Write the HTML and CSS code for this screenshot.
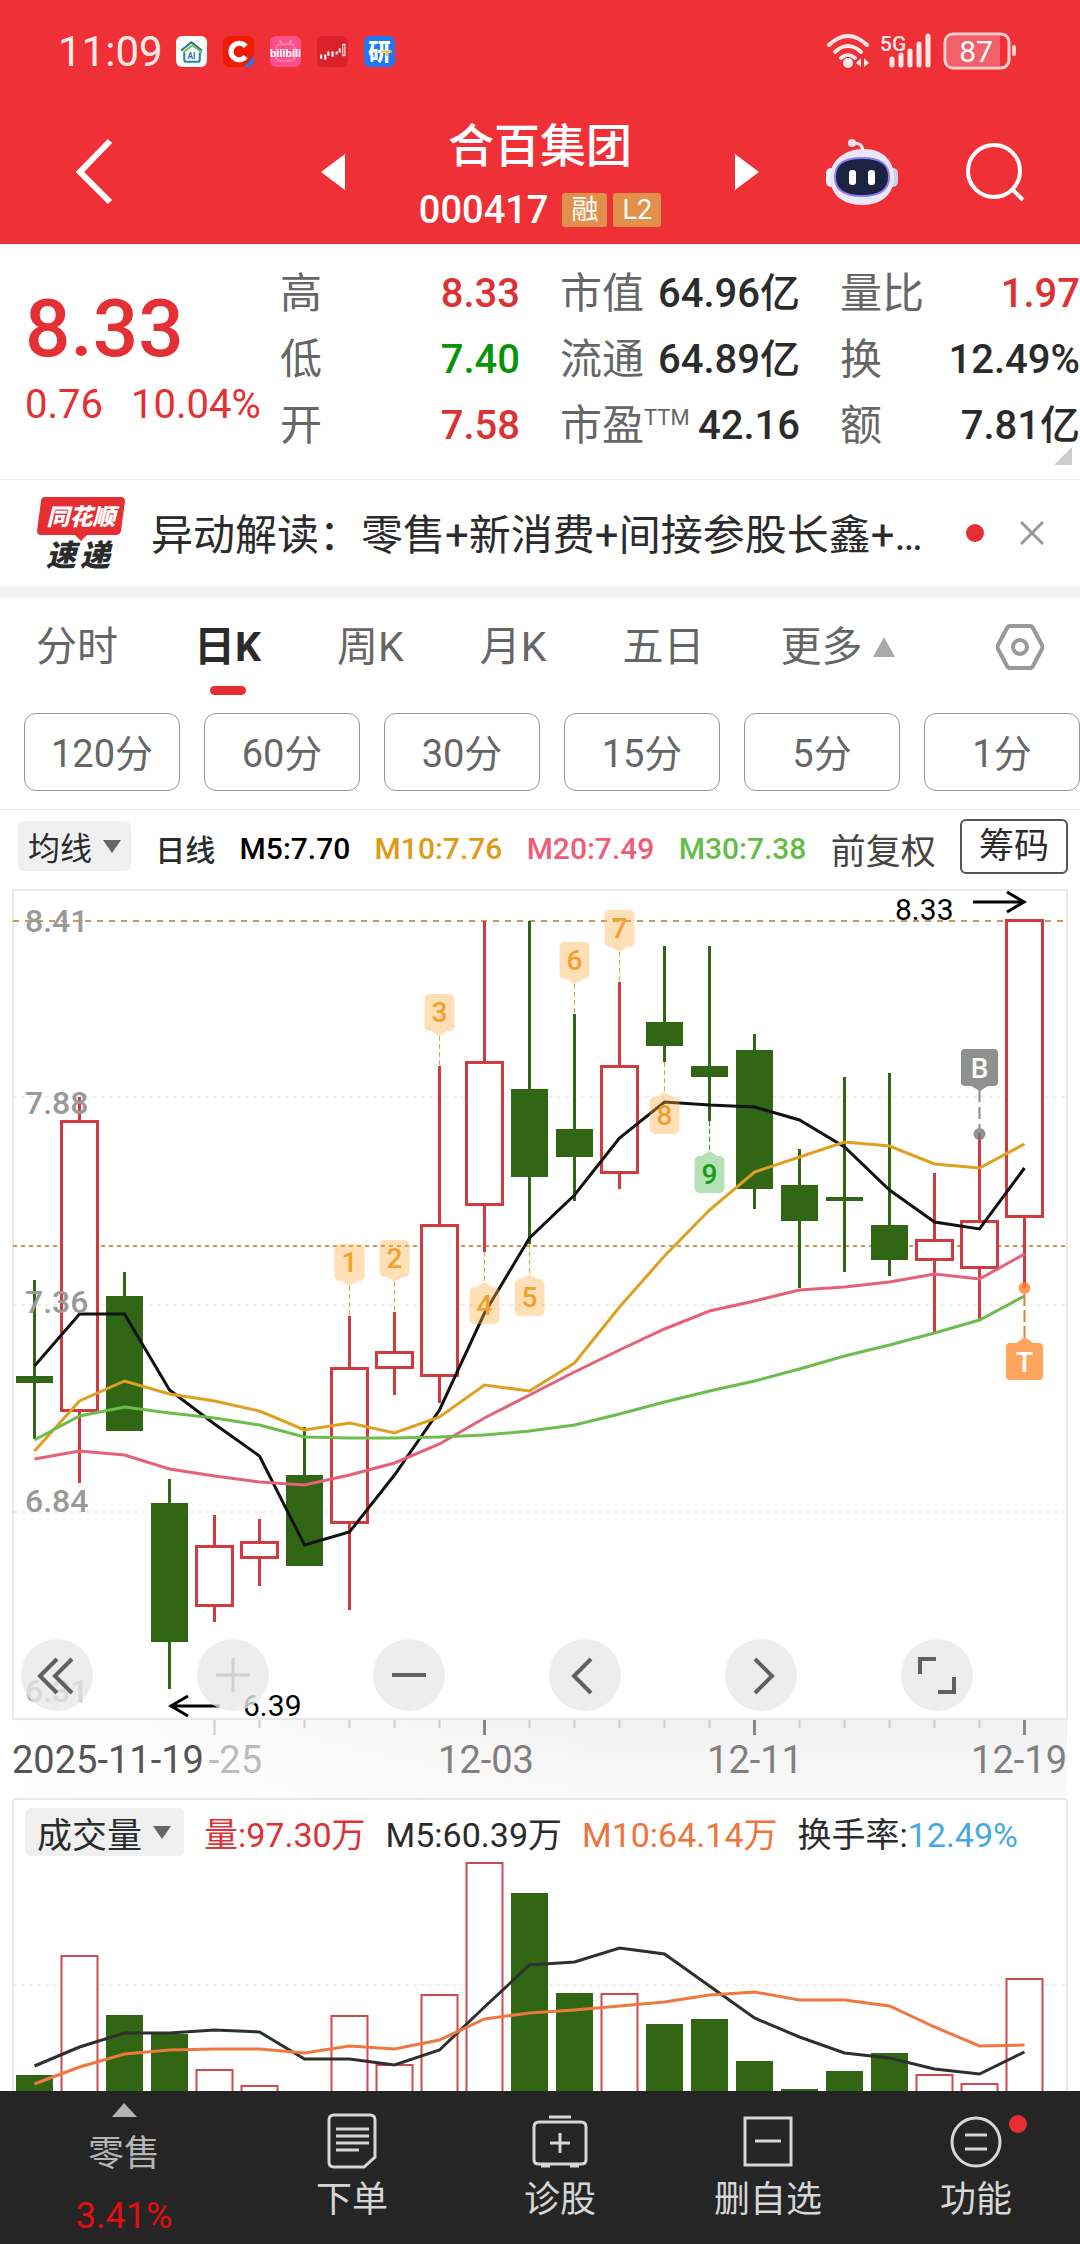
FILE: index.html
```html
<!DOCTYPE html>
<html lang="zh-CN">
<head>
    <meta charset="UTF-8">
    <meta name="viewport" content="width=device-width, initial-scale=1.0">
    <title>合百集团 000417</title>
    <link rel="stylesheet" href="styles.css">
</head>
<body>
    <header class="top">
        <div class="status">
            <span class="time">11:09</span>
            <div class="apps">
                <svg class="app" viewBox="0 0 30 30">
                    <rect width="30" height="30" rx="6" fill="#fff"/>
                    <path d="M5 14L15 6l10 8" fill="none" stroke="#1d6fb0" stroke-width="2"/>
                    <path d="M7 16l9-7 9 7" fill="none" stroke="#7cc243" stroke-width="2"/>
                    <path d="M8 16v7q0 2 2 2h11q2 0 2-2v-7" fill="none" stroke="#1f86b8" stroke-width="2"/>
                    <text x="15" y="22" font-size="8" font-weight="700" text-anchor="middle" fill="#1d6fb0">AI</text>
                </svg>
                <svg class="app" viewBox="0 0 30 30">
                    <rect width="30" height="30" rx="6" fill="#ee1c00"/>
                    <path d="M22 10a8 8 0 1 0 0 10" fill="none" stroke="#fff" stroke-width="5"/>
                    <path d="M30 19v5q0 6-6 6h-4z" fill="#3a6fd8"/>
                </svg>
                <svg class="app" viewBox="0 0 30 30">
                    <rect width="30" height="30" rx="6" fill="#ff4f8b"/>
                    <path d="M9 4l3 4M21 4l-3 4" stroke="#ff8fb5" stroke-width="2"/>
                    <rect x="6" y="8" width="18" height="16" rx="4" fill="none" stroke="#ff7eab" stroke-width="2"/>
                    <text x="15" y="20" font-size="11" font-weight="700" text-anchor="middle" fill="#fff">bilibili</text>
                </svg>
                <svg class="app" viewBox="0 0 30 30">
                    <rect width="30" height="30" rx="6" fill="#d9222c"/>
                    <path d="M4 18v4M8 18v5M11 15v4M15 15v5M19 15v3M22 12v4" stroke="#fff" stroke-width="2"/>
                    <rect x="25" y="8" width="2" height="11" fill="none" stroke="#fff"/>
                </svg>
                <svg class="app" viewBox="0 0 30 30">
                    <rect width="30" height="30" rx="6" fill="#1e78f0"/>
                    <text x="15" y="23" font-size="22" font-weight="900" text-anchor="middle" fill="#fff">研</text>
                    <path d="M16 15h11M22 15v4" stroke="#e6c33c" stroke-width="2"/>
                </svg>
            </div>
            <svg class="signals" viewBox="0 0 192 38">
                <g fill="none" stroke="#ffe9e7" stroke-width="4" stroke-linecap="round">
                    <path d="M3 13q19-18 38 0"/>
                    <path d="M9 20q13-12 26 0"/>
                    <path d="M15 26q7-6 14 0"/>
                </g>
                <circle cx="22" cy="31" r="5" fill="#ffe9e7"/>
                <path d="M35 26v9l-5-4zM38 26v9l5-4z" fill="#ffe9e7"/>
                <text x="54" y="19" font-size="21" font-weight="500" fill="#ffe9e7">5G</text>
                <path d="M66 27v6M75 23v10M84 19v14M93 12v21M102 4v29" stroke="#ffe9e7" stroke-width="5" stroke-linecap="round"/>
                <rect x="119" y="2" width="64" height="34" rx="8" fill="none" stroke="#ffd0ce" stroke-width="3"/>
                <path d="M126 4h48v30h-48q-5 0-5-5V9q0-5 5-5z" fill="#f2606a"/>
                <rect x="186" y="13" width="4" height="11" rx="2" fill="#ffd0ce"/>
                <text x="150" y="30" font-size="30" text-anchor="middle" fill="#fff">87</text>
            </svg>
        </div>
        <div class="titlebar">
            <div class="side side-left">
                <button class="icon-btn" aria-label="返回">
                    <svg width="38" height="68" viewBox="0 0 38 68"><path d="M34 3L4 34l30 30" fill="none" stroke="#fff" stroke-width="6"/></svg>
                </button>
                <button class="icon-btn" aria-label="上一只">
                    <svg width="24" height="36" viewBox="0 0 24 36"><path d="M24 0v36L0 18z" fill="#fff"/></svg>
                </button>
            </div>
            <div class="title">
                <h1>合百集团</h1>
                <div class="code">
                    <span>000417</span>
                    <em class="badge">融</em>
                    <em class="badge">L2</em>
                </div>
            </div>
            <div class="side side-right">
                <button class="icon-btn" aria-label="下一只">
                    <svg width="24" height="36" viewBox="0 0 24 36"><path d="M0 0v36l24-18z" fill="#fff"/></svg>
                </button>
                <button class="icon-btn" aria-label="助手">
                    <svg width="72" height="68" viewBox="0 0 72 68">
                        <path d="M26 5q11-1 11 9" fill="none" stroke="#f3e3ee" stroke-width="3"/>
                        <circle cx="26" cy="5" r="4" fill="#f3e3ee"/>
                        <rect x="0" y="30" width="12" height="19" rx="5" fill="#f6f0fa"/>
                        <rect x="60" y="30" width="12" height="19" rx="5" fill="#cdd0f5"/>
                        <path d="M38 11c20 0 30 13 30 28 0 17-12 28-32 28S4 56 4 39c0-15 13-28 34-28z" fill="#ebe7fa"/>
                        <path d="M36 20c20 0 27 7 27 19s-8 19-27 19S9 51 9 39s7-19 27-19z" fill="#1c2342" stroke="#8f7bf0" stroke-width="2"/>
                        <rect x="23" y="32" width="7" height="15" rx="3" fill="#fff"/>
                        <rect x="42" y="32" width="7" height="15" rx="3" fill="#fff"/>
                    </svg>
                </button>
                <button class="icon-btn" aria-label="搜索">
                    <svg width="60" height="60" viewBox="0 0 60 60"><g fill="none" stroke="#fff" stroke-width="4"><circle cx="29" cy="29" r="26"/><path d="M47 47l11 11"/></g></svg>
                </button>
            </div>
        </div>
    </header>

    <section class="quote">
        <div class="price">
            <strong>8.33</strong>
            <p><span>0.76</span><span>10.04%</span></p>
        </div>
        <dl>
            <div><dt>高</dt><dd class="red">8.33</dd></div>
            <div><dt>低</dt><dd class="green">7.40</dd></div>
            <div><dt>开</dt><dd class="red">7.58</dd></div>
        </dl>
        <dl>
            <div><dt>市值</dt><dd>64.96亿</dd></div>
            <div><dt>流通</dt><dd>64.89亿</dd></div>
            <div><dt>市盈<sup>TTM</sup></dt><dd>42.16</dd></div>
        </dl>
        <dl>
            <div><dt>量比</dt><dd class="red">1.97</dd></div>
            <div><dt>换</dt><dd>12.49%</dd></div>
            <div><dt>额</dt><dd>7.81亿</dd></div>
        </dl>
        <i class="corner"></i>
    </section>

    <section class="news">
        <svg class="news-logo" viewBox="0 0 88 74">
            <path d="M8 1h76q4 0 4 4l-4 30q-1 4-5 4H50l-6 6-6-6H4q-4 0-4-4L4 5q0-4 4-4z" fill="#e62f33"/>
            <text x="44" y="29" font-size="23" class="logo-text" fill="#fff">同花顺</text>
            <text x="24" y="70" font-size="30" class="logo-text" fill="#2b2b2b">速</text>
            <text x="58" y="70" font-size="30" class="logo-text" fill="#2b2b2b">递</text>
        </svg>
        <a href="#" class="news-text">异动解读：零售+新消费+间接参股长鑫+…</a>
        <i class="dot"></i>
        <button class="icon-btn" aria-label="关闭">
            <svg width="24" height="24" viewBox="0 0 24 24"><path d="M1 1l22 22M23 1L1 23" stroke="#999" stroke-width="3"/></svg>
        </button>
    </section>

    <nav class="tabs">
        <a href="#">分时</a>
        <a href="#" class="active">日K</a>
        <a href="#">周K</a>
        <a href="#">月K</a>
        <a href="#">五日</a>
        <a href="#" class="more">更多<svg width="22" height="20" viewBox="0 0 22 20"><path d="M11 0l11 20H0z" fill="#aaa"/></svg></a>
        <button class="icon-btn setting" aria-label="设置">
            <svg width="48" height="46" viewBox="0 0 48 46"><g fill="none" stroke="#999" stroke-width="4"><path d="M14 2h20q2 0 3 2l9 17q1 2 0 4l-9 17q-1 2-3 2H14q-2 0-3-2L2 25q-1-2 0-4l9-17q1-2 3-2z"/><circle cx="24" cy="23" r="7"/></g></svg>
        </button>
    </nav>

    <div class="periods">
        <button>120分</button>
        <button>60分</button>
        <button>30分</button>
        <button>15分</button>
        <button>5分</button>
        <button>1分</button>
    </div>

    <div class="ma-bar">
        <button class="drop">均线<i></i></button>
        <span class="dark">日线</span>
        <span class="black">M5:7.70</span>
        <span class="c10">M10:7.76</span>
        <span class="c20">M20:7.49</span>
        <span class="c30">M30:7.38</span>
        <span class="fq">前复权</span>
        <button class="chip">筹码</button>
    </div>

    <section class="kline">
        <svg id="kline" viewBox="0 880 1080 920">
            <defs>
                <linearGradient id="axisBg" x1="0" x2="0" y1="0" y2="1">
                    <stop offset="0" stop-color="#f1f1f1"/>
                    <stop offset="1" stop-color="#fafafa"/>
                </linearGradient>
                <linearGradient id="axisFade" x1="0" x2="1" y1="0" y2="0">
                    <stop offset="0" stop-color="#fff"/>
                    <stop offset="1" stop-color="#fff" stop-opacity="0"/>
                </linearGradient>
            </defs>
            <rect x="13" y="1719" width="1054" height="80" fill="url(#axisBg)"/>
            <rect x="13" y="1719" width="600" height="80" fill="url(#axisFade)"/>
            <path class="frame" d="M13 1719V890h1054v829M13 1719h1054M13 1799h1054"/>
            <path class="grid" d="M13 1097h1054M13 1305h1054M13 1512h1054"/>
            <path class="limit" stroke-dasharray="6 6" d="M13 921h1054"/>
            <path class="limit" stroke-dasharray="4 4" d="M13 1246h1054"/>
            <g id="candles"></g>
            <g id="ma"></g>
            <g class="scale">
                <text x="25" y="932">8.41</text>
                <text x="25" y="1114">7.88</text>
                <text x="25" y="1313">7.36</text>
                <text x="25" y="1512">6.84</text>
                <text x="25" y="1702">6.31</text>
            </g>
            <g id="tags"></g>
            <g class="arrow">
                <path d="M973 902h51M1007 892l17 10-17 10"/>
                <path d="M220 1706h-50M188 1696l-17 10 17 10"/>
            </g>
            <text class="mark" x="895" y="920">8.33</text>
            <text class="mark" x="243" y="1716">6.39</text>
            <g id="ticks"></g>
            <g class="dates">
                <text x="12" y="1773" fill="#555">2025-11-19</text>
                <text x="262" y="1773" fill="#bbb" text-anchor="end">-25</text>
                <text x="486" y="1773" text-anchor="middle">12-03</text>
                <text x="755" y="1773" text-anchor="middle">12-11</text>
                <text x="1067" y="1773" text-anchor="end">12-19</text>
            </g>
        </svg>
        <div class="controls">
            <button aria-label="收起"><svg viewBox="0 0 72 72"><path d="M36 20L19 37l17 17M51 20L34 37l17 17"/></svg></button>
            <button aria-label="放大" class="off"><svg viewBox="0 0 72 72"><path d="M36 19v34M19 36h34"/></svg></button>
            <button aria-label="缩小"><svg viewBox="0 0 72 72"><path d="M19 36h34"/></svg></button>
            <button aria-label="左移"><svg viewBox="0 0 72 72"><path d="M42 20L25 37l17 17"/></svg></button>
            <button aria-label="右移"><svg viewBox="0 0 72 72"><path d="M30 20l17 17-17 17"/></svg></button>
            <button aria-label="全屏"><svg viewBox="0 0 72 72"><path d="M19 35V20h16M53 38v15H37"/></svg></button>
        </div>
    </section>

    <section class="volume">
        <div class="vol-bar">
            <button class="drop">成交量<i></i></button>
            <span class="red">量:97.30万</span>
            <span class="dark">M5:60.39万</span>
            <span class="orange">M10:64.14万</span>
            <span class="dark">换手率:<b>12.49%</b></span>
        </div>
        <svg id="volume" viewBox="0 1860 1080 231">
            <path class="frame" d="M13 1860v231M1067 1860v231"/>
            <path class="grid" d="M13 1985h1054"/>
            <g id="volBars"></g>
            <g id="volMa"></g>
        </svg>
    </section>

    <footer class="bottom">
        <a href="#" class="sector">
            <svg width="25" height="14" viewBox="0 0 25 14"><path d="M12 0l13 14H0z" fill="#b5b5b5"/></svg>
            <span>零售</span>
            <b>3.41%</b>
        </a>
        <a href="#">
            <svg width="56" height="56" viewBox="0 0 56 56"><path d="M10 2h36q5 0 5 5v37L40 54H10q-5 0-5-5V7q0-5 5-5zM12 16h33M12 23h33M12 30h33M12 37h23"/></svg>
            <span>下单</span>
        </a>
        <a href="#">
            <svg width="56" height="56" viewBox="0 0 56 56"><path d="M17 4h22M7 9h42q5 0 5 5v33q0 4-5 4H7q-5 0-5-4V14q0-5 5-5zM28 20v20M18 30h20M9 53h9M38 53h9"/></svg>
            <span>诊股</span>
        </a>
        <a href="#">
            <svg width="56" height="56" viewBox="0 0 56 56"><path d="M5 5h46v47H5zM15 28h26"/></svg>
            <span>删自选</span>
        </a>
        <a href="#">
            <svg width="56" height="56" viewBox="0 0 56 56"><circle cx="28" cy="29" r="24"/><path d="M17 22h22M17 36h22"/></svg>
            <span>功能</span>
            <i class="dot"></i>
        </a>
    </footer>

    <script src="chart.js"></script>
</body>
</html>
```
FILE: styles.css
```css
*{
    margin: 0;
    padding: 0;
    box-sizing: border-box;
}
body{
    background-color: #fff;
    color: #2b2b2b;
    font-family: Roboto, "Noto Sans CJK SC", sans-serif;
    font-size: 34px;
    overflow-x: hidden;
}
button{
    border: none;
    background: none;
    font-family: inherit;
    color: inherit;
}
a{
    color: inherit;
    text-decoration: none;
}
svg{
    display: block;
}
em, i{
    font-style: normal;
}
.icon-btn{
    flex-shrink: 0;
}
.red{ color: #dc3236; }
.green{ color: #079407; }
.dark{ color: #2b2b2b; }
.black{ color: #000; }
.orange{ color: #f0733a; }
.c10{ color: #e09a14; }
.c20{ color: #ee5d78; }
.c30{ color: #64bd46; }
.dot{
    width: 18px;
    height: 18px;
    border-radius: 50%;
    background-color: #e62f33;
}

/* 顶部 */
.top{
    height: 244px;
    background-color: #f03037;
    color: #fff;
}
.status{
    display: flex;
    align-items: center;
    height: 102px;
    padding: 0 62px 0 58px;
}
.time{
    font-size: 42px;
    width: 118px;
    color: #ffe9e7;
}
.apps{
    display: flex;
    gap: 16px;
}
.app{
    width: 31px;
    height: 31px;
}
.signals{
    width: 192px;
    margin-left: auto;
}
.titlebar{
    display: grid;
    grid-template-columns: 1fr 390px 1fr;
}
.side{
    display: flex;
    align-items: center;
    justify-content: space-between;
    height: 142px;
    padding-bottom: 2px;
}
.side-left{
    padding-left: 76px;
}
.side-right{
    padding-right: 55px;
}
.title{
    text-align: center;
    padding-top: 11px;
}
.title h1{
    font-size: 46px;
    line-height: 66px;
    font-weight: 500;
}
.code{
    display: flex;
    justify-content: center;
    align-items: center;
    gap: 6px;
    height: 62px;
    font-size: 38px;
    font-weight: 500;
}
.code span{
    margin-right: 8px;
}
.badge{
    padding: 0 9px;
    height: 34px;
    line-height: 34px;
    border-radius: 3px;
    background-color: #e2914c;
    font-size: 27px;
    font-weight: 400;
}

/* 行情 */
.quote{
    position: relative;
    display: grid;
    grid-template-columns: 240px 1fr 1fr 1fr;
    column-gap: 40px;
    padding: 17px 0 20px;
}
.price{
    padding: 18px 0 0 25px;
    color: #e43033;
    white-space: nowrap;
}
.price strong{
    display: block;
    font-size: 80px;
    line-height: 100px;
    font-weight: 500;
}
.price p{
    display: flex;
    gap: 28px;
    font-size: 40px;
    line-height: 52px;
}
.quote dl div{
    display: flex;
    justify-content: space-between;
    height: 66px;
    line-height: 66px;
}
.quote dt{
    font-size: 42px;
    color: #666;
    white-space: nowrap;
}
.quote dd{
    font-size: 40px;
    font-weight: 500;
}
.quote sup{
    font-size: 22px;
    line-height: 1;
}
.corner{
    position: absolute;
    right: 8px;
    bottom: 14px;
    border-left: 18px solid transparent;
    border-bottom: 18px solid #ccc;
}

/* 异动解读 */
.news{
    display: flex;
    align-items: center;
    height: 119px;
    padding: 0 24px 0 37px;
    border-top: 1px solid #eee;
    border-bottom: 12px solid #f4f4f4;
}
.news-logo{
    width: 88px;
    margin-right: 26px;
    flex-shrink: 0;
}
.logo-text{
    font-weight: 900;
    font-style: italic;
    text-anchor: middle;
}
.news-text{
    padding-bottom: 3px;
    font-size: 42px;
    white-space: nowrap;
}
.news .dot{
    margin-left: auto;
    flex-shrink: 0;
}
.news .icon-btn{
    margin: 0 12px 0 36px;
}

/* 周期 */
.tabs{
    display: flex;
    align-items: center;
    gap: 76px;
    height: 98px;
    padding: 0 36px;
    font-size: 41px;
    color: #666;
}
.tabs a{
    position: relative;
    line-height: 98px;
    white-space: nowrap;
}
.tabs .active{
    color: #2b2b2b;
    font-weight: 700;
}
.tabs .active::after{
    content: "";
    position: absolute;
    left: 50%;
    bottom: 1px;
    width: 36px;
    height: 9px;
    margin-left: -18px;
    border-radius: 5px;
    background-color: #e62f33;
}
.tabs .more{
    display: flex;
    align-items: center;
    gap: 10px;
}
.setting{
    margin-left: auto;
}
.periods{
    display: grid;
    grid-template-columns: repeat(6, 1fr);
    gap: 24px;
    padding: 17px 0 18px 24px;
    border-bottom: 1px solid #e4e4e4;
}
.periods button{
    height: 78px;
    padding-bottom: 3px;
    border: 1px solid #999;
    border-radius: 12px;
    font-size: 38px;
    color: #666;
}
.ma-bar{
    display: flex;
    align-items: center;
    justify-content: space-between;
    height: 70px;
    padding: 2px 12px 0 18px;
    font-size: 30px;
    white-space: nowrap;
}
.ma-bar span{
    padding-top: 4px;
    font-weight: 500;
}
.drop{
    display: flex;
    align-items: center;
    gap: 11px;
    height: 50px;
    padding: 0 10px;
    border-radius: 6px;
    background-color: #f0f0f0;
    font-size: 32px;
}
.drop i{
    border: 9px solid transparent;
    border-top: 13px solid #666;
    border-bottom: none;
}
.ma-bar .fq{
    font-size: 35px;
    font-weight: 400;
    color: #444;
}
.chip{
    width: 108px;
    height: 55px;
    border: 2px solid #555;
    border-radius: 6px;
    font-size: 35px;
    line-height: 49px;
}

/* K线 */
.kline{
    position: relative;
}
.kline > svg, .volume > svg{
    width: 100%;
}
.frame{
    fill: none;
    stroke: #e8e8e8;
    stroke-width: 2;
}
.grid{
    stroke: #ddd;
    stroke-dasharray: 4 4;
}
.limit{
    stroke: #c79a5c;
    stroke-width: 2;
}
.up{
    fill: #fff;
    stroke: #d23b3e;
    stroke-width: 3;
}
.wick-up{
    stroke: #d23b3e;
    stroke-width: 3;
}
.down{
    fill: #306614;
}
.wick-down{
    stroke: #306614;
    stroke-width: 3;
}
.line{
    fill: none;
    stroke-width: 3;
}
.scale{
    font-size: 32px;
    font-weight: 500;
    fill: #999;
}
.mark{
    font-size: 30px;
}
.arrow{
    fill: none;
    stroke: #000;
    stroke-width: 3;
}
.dates{
    font-size: 38px;
    fill: #808080;
}
.tag-text{
    text-anchor: middle;
    font-size: 28px;
    font-weight: 500;
}
.controls{
    position: absolute;
    left: 21px;
    right: 107px;
    bottom: 89px;
    display: flex;
    justify-content: space-between;
}
.controls button{
    width: 72px;
    height: 72px;
    border-radius: 50%;
    background-color: rgba(232, 232, 232, 0.8);
}
.controls path{
    fill: none;
    stroke: #606060;
    stroke-width: 4;
}
.controls .off path{
    stroke: #cfcfcf;
    stroke-width: 3;
}

/* 成交量 */
.vol-bar{
    display: flex;
    align-items: center;
    justify-content: space-between;
    height: 60px;
    margin: 0 12px;
    padding: 4px 48px 0 11px;
    border: 2px solid #e8e8e8;
    border-width: 0 2px;
    font-size: 34px;
    white-space: nowrap;
}
.vol-bar .drop{
    height: 48px;
    padding: 0 13px 0 12px;
    font-size: 35px;
}
.vol-bar b{
    font-weight: 400;
    color: #47a9e4;
}
.vol-up{
    fill: #fff;
    stroke: #cf4a50;
    stroke-width: 2;
}

/* 底部 */
.bottom{
    display: grid;
    grid-template-columns: 248fr 208fr 208fr 208fr 208fr;
    height: 153px;
    background-color: #252525;
    color: #d6d6d6;
    font-size: 36px;
}
.bottom a{
    position: relative;
    display: flex;
    flex-direction: column;
    align-items: center;
    padding-top: 22px;
    line-height: 50px;
}
.bottom a:not(.sector) svg{
    fill: none;
    stroke: #d6d6d6;
    stroke-width: 3;
    margin-bottom: 6px;
}
.bottom .sector{
    padding-top: 12px;
    color: #b5b5b5;
}
.sector span{
    padding-top: 12px;
}
.sector b{
    padding-top: 12px;
    font-weight: 400;
    color: #e60c0c;
}
.bottom .dot{
    position: absolute;
    top: 24px;
    left: 137px;
}
```
FILE: chart.js
```js
// 每根K线: [颜色, 最高, 实体上沿, 实体下沿, 最低]
const candles = [
    ['g', 1280, 1376, 1383, 1439], ['r', 1097, 1120, 1412, 1483], ['g', 1272, 1296, 1431, 1431],
    ['g', 1479, 1503, 1642, 1689], ['r', 1515, 1545, 1607, 1622], ['r', 1519, 1541, 1559, 1586],
    ['g', 1427, 1475, 1566, 1566], ['r', 1316, 1367, 1524, 1610], ['r', 1312, 1351, 1369, 1395],
    ['r', 1066, 1224, 1377, 1403], ['r', 921, 1061, 1206, 1252], ['g', 921, 1089, 1177, 1244],
    ['g', 1014, 1129, 1157, 1201], ['r', 982, 1065, 1174, 1189], ['g', 946, 1022, 1046, 1062],
    ['g', 946, 1066, 1077, 1121], ['g', 1034, 1050, 1189, 1209], ['g', 1149, 1185, 1221, 1288],
    ['g', 1077, 1197, 1201, 1272], ['g', 1073, 1225, 1260, 1276], ['r', 1173, 1239, 1261, 1332],
    ['r', 1133, 1220, 1269, 1319], ['r', 919, 919, 1218, 1288]
]

const ma = [
    ['#111', [1366, 1314, 1314, 1390, 1424, 1456, 1545, 1532, 1475, 1410, 1313, 1238, 1195, 1138, 1102, 1105, 1107, 1120, 1147, 1190, 1222, 1229, 1168]],
    ['#dfa022', [1451, 1401, 1381, 1394, 1401, 1411, 1430, 1423, 1433, 1417, 1385, 1391, 1363, 1307, 1256, 1210, 1172, 1157, 1142, 1146, 1164, 1168, 1144]],
    ['#e6607a', [1459, 1451, 1455, 1469, 1476, 1482, 1485, 1475, 1463, 1444, 1418, 1395, 1372, 1350, 1329, 1311, 1301, 1290, 1287, 1282, 1274, 1279, 1254]],
    ['#6cbd4c', [1440, 1416, 1407, 1413, 1418, 1425, 1437, 1438, 1438, 1437, 1435, 1431, 1425, 1414, 1402, 1391, 1381, 1369, 1356, 1345, 1333, 1320, 1296]]
]

const volTop = [2075, 1955, 2015, 2034, 2069, 2085, 2095, 2015, 2064, 1994, 1862, 1893, 1993, 1993, 2024, 2019, 2061, 2089, 2071, 2053, 2074, 2083, 1978]
const volMa = [
    ['#2f2f2f', [2066, 2047, 2033, 2033, 2030, 2032, 2059, 2059, 2065, 2050, 2007, 1965, 1962, 1948, 1954, 1986, 2018, 2037, 2053, 2058, 2069, 2074, 2052]],
    ['#ee7840', [2084, 2067, 2054, 2050, 2049, 2049, 2053, 2046, 2049, 2040, 2019, 2013, 2010, 2006, 2002, 1995, 1992, 2000, 2000, 2006, 2027, 2046, 2045]]
]

// 九转标记: [序号, 文字, 方块上沿, 是否在K线上方]
const tags = [
    [7, '1', 1244, true], [8, '2', 1240, true], [9, '3', 994, true], [10, '4', 1287, false],
    [11, '5', 1279, false], [12, '6', 942, true], [13, '7', 910, true], [14, '8', 1097, false],
    [15, '9', 1156, false]
]

function cx(i) {
    return 34.5 + 45 * i
}

function lines(list) {
    return list.map(([color, ys]) =>
        `<polyline class="line" stroke="${color}" points="${ys.map((y, i) => cx(i) + ',' + y).join(' ')}"/>`
    ).join('')
}

function candle([c, high, top, bottom, low], i) {
    let x = cx(i)
    if (c == 'g') {
        return `<path class="wick-down" d="M${x} ${high}V${low}"/><rect class="down" x="${x - 18.5}" y="${top}" width="37" height="${bottom - top}"/>`
    }
    return `<path class="wick-up" d="M${x} ${high}V${top}M${x} ${bottom}V${low}"/>
        <rect class="up" x="${x - 18}" y="${top + 1.5}" width="36" height="${bottom - top - 3}"/>`
}

function volBar(top, i) {
    let x = cx(i)
    if (candles[i][0] == 'g') {
        return `<rect class="down" x="${x - 18.5}" y="${top}" width="37" height="260"/>`
    }
    return `<rect class="vol-up" x="${x - 18}" y="${top + 1}" width="36" height="260"/>`
}

function tag([i, text, y, above]) {
    let x = cx(i)
    let color = text == '9' ? '#12a012' : '#f0a02c'
    let bg = text == '9' ? '#3cb043' : '#ffab3d'
    let tip = above ? `M${x - 8} ${y + 37}h16l-8 5z` : `M${x - 8} ${y}h16l-8-5z`
    let dash = above ? `M${x} ${y + 42}v30` : `M${x} ${y - 35}v30`
    return `<path d="${dash}" stroke="${color}" stroke-dasharray="5 3"/>
        <g fill="${bg}" fill-opacity="0.38"><rect x="${x - 15}" y="${y}" width="30" height="37" rx="5"/><path d="${tip}"/></g>
        <text class="tag-text" x="${x}" y="${y + 28}" fill="${color}">${text}</text>`
}

// 买卖点
const points = `
    <path d="M979.5 1090v38" stroke="#888" stroke-width="2" stroke-dasharray="12 5"/>
    <circle cx="979.5" cy="1134" r="6" fill="#777" fill-opacity="0.8"/>
    <rect x="961" y="1049" width="37" height="37" rx="4" fill="#909090"/>
    <path d="M971 1086h17l-8 5z" fill="#909090"/>
    <text class="tag-text" x="979.5" y="1078" fill="#fff">B</text>
    <path d="M1024.5 1294v44" stroke="#e08040" stroke-width="2" stroke-dasharray="12 4"/>
    <circle cx="1024.5" cy="1288" r="6" fill="#ff7f2a" fill-opacity="0.8"/>
    <rect x="1006" y="1343" width="37" height="37" rx="4" fill="#ffa55e"/>
    <path d="M1016 1343h17l-8-6z" fill="#ffa55e"/>
    <text class="tag-text" x="1024.5" y="1372" fill="#fff">T</text>`

let ticks = ''
for (let i = 4; i < candles.length; i++) {
    let major = i > 4 && (i - 4) % 6 == 0
    let len = (i - 4) % 6 == 0 ? 15 : 8
    ticks += `<path d="M${cx(i)} 1720v${len}" stroke="${major ? '#888' : '#ccc'}" stroke-width="${major ? 3 : 2}"/>`
}

document.getElementById('candles').innerHTML = candles.map(candle).join('')
document.getElementById('ma').innerHTML = lines(ma)
document.getElementById('tags').innerHTML = tags.map(tag).join('') + points
document.getElementById('ticks').innerHTML = ticks
document.getElementById('volBars').innerHTML = volTop.map(volBar).join('')
document.getElementById('volMa').innerHTML = lines(volMa)
```
